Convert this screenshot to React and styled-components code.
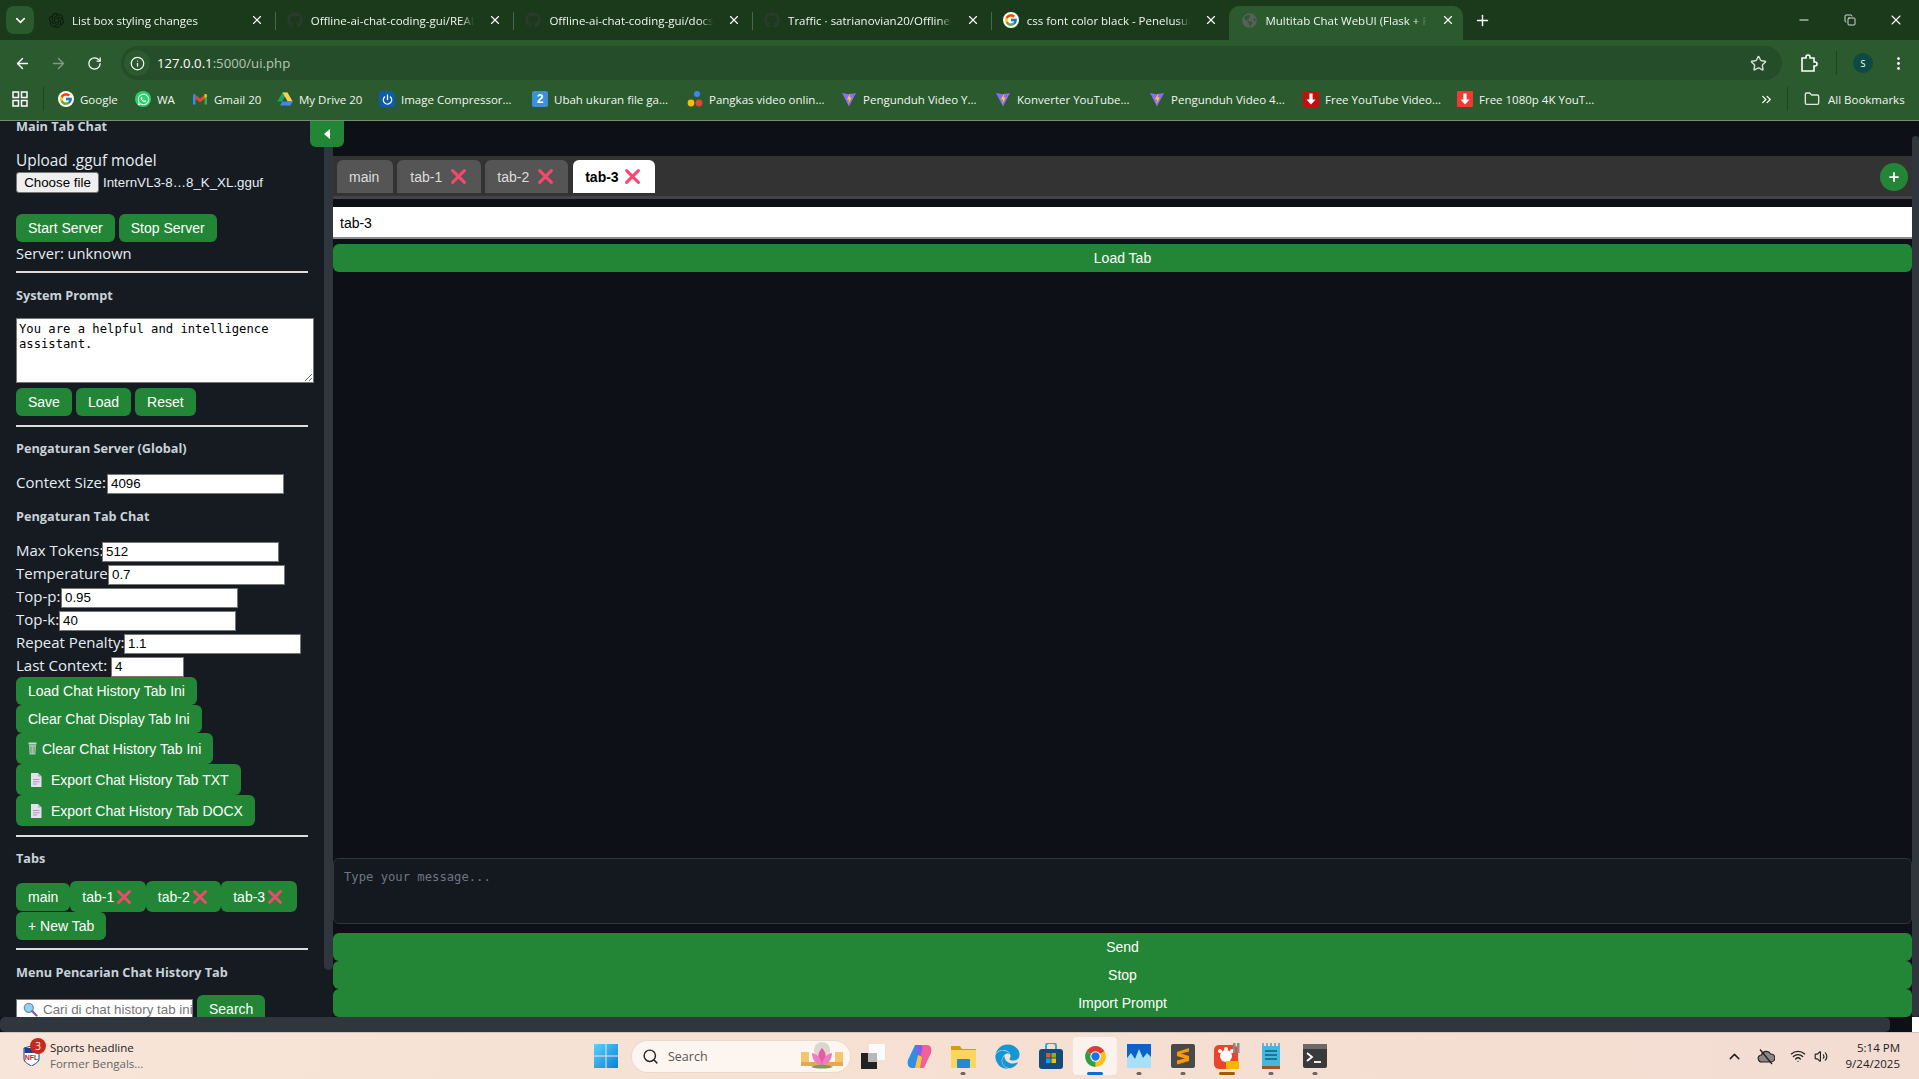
import React from 'react'
import styled, { createGlobalStyle } from 'styled-components'
import {
    ArrowLeft, ArrowRight, RotateCw, Info, Star, MoreVertical, Plus, X, Minus, Copy,
    ChevronDown, ChevronsRight, Folder, Search as SearchIcon, ChevronUp, Wifi, Volume2, Power,
} from 'lucide-react'
import { FcGoogle } from 'react-icons/fc'
import { FaWhatsapp, FaGithub, FaGlobeAmericas, FaEdge } from 'react-icons/fa'
import { SiOpenai } from 'react-icons/si'

const GlobalStyle = createGlobalStyle`
    html, body { margin: 0; padding: 0; height: 100%; overflow: hidden; background: #0d1117; }
    * { box-sizing: border-box; }
`

const UI_FONT = '"Open Sans", "Noto Sans", sans-serif'
const ARIAL = '"Liberation Sans", Arial, sans-serif'
const MONO = '"DejaVu Sans Mono", "Liberation Mono", monospace'
const GREEN = '#238636'

/* ---------- drawn icons ---------- */

const CrossMark = ({ size = 14 }) => (
    <svg width={size} height={size} viewBox="0 0 14 14">
        <path d="M1.500 1.500L12.500 12.500M12.500 1.500L1.500 12.500" stroke="#f7476f" strokeWidth="2.800" strokeLinecap="round" />
    </svg>
)

const ExtensionIcon = () => (
    <svg width="18" height="20" viewBox="0 0 18 20" fill="none" stroke="#fff" strokeWidth="1.600">
        <path d="M2 5h4V4a2 2 0 0 1 4 0v1h4v4h1a2 2 0 0 1 0 4h-1v5H2z" />
    </svg>
)

const CloudSlashIcon = () => (
    <svg width="18" height="17" viewBox="0 0 18 17">
        <path d="M5 14a3.500 3.500 0 0 1-.6-7A5 5 0 0 1 13.600 6a4 4 0 0 1 .4 8z" fill="#8a8785" stroke="#222" strokeWidth="1.200" />
        <path d="M3 1.500L15 16" stroke="#222" strokeWidth="1.300" />
    </svg>
)

const ChromeLogo = ({ size = 16 }) => (
    <svg width={size} height={size} viewBox="0 0 48 48">
        <path d="M24 24L6.700 14A20 20 0 0 1 41.300 14Z" fill="#e33b2e" />
        <path d="M24 24L41.300 14A20 20 0 0 1 24 44Z" fill="#fbc116" />
        <path d="M24 24L24 44A20 20 0 0 1 6.700 14Z" fill="#2f9e44" />
        <circle cx="24" cy="24" r="10" fill="#fff" />
        <circle cx="24" cy="24" r="8" fill="#1a73e8" />
    </svg>
)

const GmailIcon = () => (
    <svg width="16" height="16" viewBox="0 0 16 16">
        <path d="M3.500 4L8 7.600 12.500 4v4L8 11.200 3.500 8z" fill="#ea4335" />
        <path d="M1 4.500C1 3 2.500 2.500 3.500 3.300V13.500H1.500A.5 .5 0 0 1 1 13z" fill="#4285f4" />
        <path d="M15 4.500C15 3 13.500 2.500 12.500 3.300V13.500h2A.5 .5 0 0 0 15 13z" fill="#34a853" />
        <path d="M12.500 3.300C13.500 2.500 15 3 15 4.500V5.500L12.500 7.500z" fill="#fbbc04" />
    </svg>
)

const DriveIcon = () => (
    <svg width="16" height="16" viewBox="0 0 16 16">
        <path d="M5.500 1.500h5L5.200 10.500H.3z" fill="#1fa463" />
        <path d="M10.500 1.500l5.200 9h-5L5.500 1.500z" fill="#ffd04b" />
        <path d="M3 14.500l2.200-4h10.500l-2.300 4z" fill="#4285f4" />
    </svg>
)

const CompressorIcon = () => (
    <IconTile $bg="#0d5cab" $size={16}><Power size={11} color="#fff" strokeWidth={3} /></IconTile>
)

const DotsIcon = () => (
    <svg width="16" height="16" viewBox="0 0 16 16">
        <circle cx="10" cy="3" r="3" fill="#4285f4" />
        <circle cx="4" cy="12" r="3.400" fill="#fbbc04" />
        <circle cx="12" cy="12" r="3.400" fill="#ea4335" />
    </svg>
)

const BoltIcon = () => (
    <svg width="16" height="16" viewBox="0 0 16 16">
        <path d="M1 2l7 1.200L15 2 8 15.500z" fill="#8d6cf5" />
        <path d="M9.500 2L5.800 8.400h2.300L7.200 13l3.600-6.400H8.600z" fill="#ffc91f" />
    </svg>
)

const RedArrowIcon = ({ dark }) => (
    <svg width="16" height="16" viewBox="0 0 16 16">
        <rect width="16" height="16" rx="1" fill={dark ? '#c40f0f' : '#ee3a32'} />
        <path d="M6.400 2.500h3.200v6H12.500L8 13.500 3.500 8.500h2.900z" fill="#fff" />
    </svg>
)

const AppsIcon = () => (
    <svg width="16" height="16" viewBox="0 0 16 16" fill="none" stroke="#fff" strokeWidth="1.500">
        <rect x="1" y="1" width="5.500" height="5.500" />
        <rect x="9.500" y="1" width="5.500" height="5.500" />
        <rect x="1" y="9.500" width="5.500" height="5.500" />
        <rect x="9.500" y="9.500" width="5.500" height="5.500" />
    </svg>
)

const TrashGlyph = () => (
    <svg width="9" height="13" viewBox="0 0 9 13">
        <rect x="0.500" y="0.500" width="8" height="2" fill="#cfd8cf" />
        <path d="M1 3h7l-.6 9.500H1.600z" fill="#a9c4ae" />
        <path d="M3 4.500v6.500M6 4.500v6.500" stroke="#5e8a69" strokeWidth="0.800" />
    </svg>
)

const PageGlyph = () => (
    <svg width="12" height="14" viewBox="0 0 12 14">
        <path d="M1 0h7l3.500 3.500V14H1z" fill="#e7deef" />
        <path d="M8 0l3.500 3.500H8z" fill="#b9aec9" />
        <path d="M3 6.500h6.500M3 8.800h6.500M3 11h4" stroke="#a99cb8" strokeWidth="1" />
    </svg>
)

const LensGlyph = () => (
    <svg width="15" height="15" viewBox="0 0 15 15">
        <circle cx="5.800" cy="5.800" r="4.500" fill="#8fd3f4" stroke="#7a8ea8" strokeWidth="1.300" />
        <path d="M9.200 9.200l4.300 4.300" stroke="#8e5ea8" strokeWidth="2.400" strokeLinecap="round" />
    </svg>
)

const WindowsLogo = () => (
    <svg width="24" height="24" viewBox="0 0 24 24">
        <defs>
            <linearGradient id="winBlue" x1="0" y1="0" x2="1" y2="1">
                <stop offset="0" stopColor="#5ad1fb" />
                <stop offset="1" stopColor="#0a7fd6" />
            </linearGradient>
        </defs>
        <path d="M0 0h11.500v11.500H0zM12.500 0H24v11.500H12.500zM0 12.500h11.500V24H0zM12.500 12.500H24V24H12.500z" fill="url(#winBlue)" />
    </svg>
)

const TaskViewIcon = () => (
    <svg width="25" height="25" viewBox="0 0 25 25">
        <rect x="8" y="0" width="16" height="16" fill="#fbfbfb" />
        <rect x="0" y="9" width="16" height="16" fill="#222" />
        <rect x="7" y="9" width="9" height="9" fill="#b8b8b8" />
    </svg>
)

const CopilotIcon = () => (
    <svg width="25" height="25" viewBox="0 0 25 25">
        <path d="M8 1h6l-5 23H5C1 24 0 20 1 16z" fill="#2f8fe8" />
        <path d="M9 1h5c2 0 3 1 4 4l1 5-8 3z" fill="#8a5be8" />
        <path d="M17 24h-6l5-23h4c4 0 5 4 4 8z" fill="#f0609a" />
        <path d="M8 24l3-13 4 2-2 11z" fill="#f6c343" />
    </svg>
)

const FilesIcon = () => (
    <svg width="25" height="25" viewBox="0 0 25 25">
        <path d="M0 2h9l2 3h14v19H0z" fill="#d99a12" />
        <rect y="6" width="25" height="18" fill="#fbd75b" />
        <rect x="6" y="15" width="13" height="9" rx="1" fill="#1f8ad6" />
    </svg>
)

const StoreIcon = () => (
    <svg width="24" height="26" viewBox="0 0 24 26">
        <path d="M7 7V3a3 3 0 0 1 3-3h4a3 3 0 0 1 3 3v4" fill="none" stroke="#35a7e0" strokeWidth="2" />
        <rect y="6" width="24" height="20" rx="3" fill="#164a78" />
        <rect x="7" y="10" width="4.500" height="4.500" fill="#f25022" />
        <rect x="12.500" y="10" width="4.500" height="4.500" fill="#7fba00" />
        <rect x="7" y="15.500" width="4.500" height="4.500" fill="#00a4ef" />
        <rect x="12.500" y="15.500" width="4.500" height="4.500" fill="#ffb900" />
    </svg>
)

const WaveIcon = () => (
    <svg width="24" height="24" viewBox="0 0 24 24">
        <rect width="24" height="24" fill="#0d62c9" />
        <path d="M0 14l4-5 4 6 4-10 4 9 4-5 4 4v11H0z" fill="#a8e0fa" />
    </svg>
)

const SublimeIcon = () => (
    <IconTile $bg="#4a4a4a" $size={24} $radius={2}>
        <svg width="14" height="18" viewBox="0 0 14 18">
            <path d="M13 1L1 5v4l12 4V9L5 6.600 13 4.500zM1 13.500L9 11.400 13 13v1L1 17.500z" fill="#ff9800" />
        </svg>
    </IconTile>
)

const GomIcon = () => (
    <svg width="26" height="26" viewBox="0 0 26 26">
        <rect y="2" width="24" height="24" rx="5" fill="#e8452c" />
        <circle cx="12" cy="13" r="6" fill="#fff" />
        <circle cx="6" cy="8" r="2" fill="#fff" />
        <circle cx="12" cy="6" r="2" fill="#fff" />
        <circle cx="18" cy="8" r="2" fill="#fff" />
        <rect x="12" y="18" width="13" height="8" rx="1" fill="#f7b500" />
        <rect x="19" y="0" width="2.500" height="10" fill="#8a8a8a" />
        <rect x="23" y="0" width="2.500" height="10" fill="#8a8a8a" />
    </svg>
)

const NotesIcon = () => (
    <svg width="18" height="26" viewBox="0 0 18 26">
        <path d="M1 0v3M5 0v3M9 0v3M13 0v3M17 0v3" stroke="#2f8fb5" strokeWidth="1.200" />
        <rect y="3" width="18" height="20" fill="#45b6dc" />
        <path d="M3 8h12M3 12h12M3 16h12" stroke="#0f5f80" strokeWidth="1.500" />
        <rect y="23" width="18" height="3" fill="#9a5a1e" />
    </svg>
)

const TerminalIcon = () => (
    <svg width="24" height="24" viewBox="0 0 24 24">
        <rect width="24" height="24" rx="2" fill="#3a3a3a" />
        <rect width="24" height="5" fill="#6a6a6a" />
        <path d="M4 9l5 4-5 4" fill="none" stroke="#fff" strokeWidth="1.800" />
        <path d="M11 18h7" stroke="#fff" strokeWidth="1.800" />
    </svg>
)

const LotusPicture = () => (
    <svg width="46" height="28" viewBox="0 0 46 28">
        <rect x="2" y="10" width="8" height="10" fill="#f3c66b" />
        <rect x="36" y="10" width="8" height="10" fill="#f3c66b" />
        <circle cx="23" cy="8" r="8" fill="#dcd6cf" />
        <path d="M2 20h42v4H2z" fill="#e6a94a" />
        <path d="M23 6c5 5 5 12 0 17-5-5-5-12 0-17z" fill="#e65aa8" />
        <path d="M13 11c6 1 9 6 10 12-6 0-10-5-10-12zM33 11c-6 1-9 6-10 12 6 0 10-5 10-12z" fill="#f07cc0" />
        <path d="M12 25c6-3 16-3 22 0-6 2-16 2-22 0z" fill="#7c9a58" />
    </svg>
)

const NflShield = () => (
    <svg width="17" height="20" viewBox="0 0 17 20">
        <path d="M1 2l7.500-2L16 2v11c0 3-4 5-7.500 7C5 18 1 16 1 13z" fill="#fff" stroke="#1c3f94" />
        <rect x="1.500" y="2" width="14" height="5" fill="#1c3f94" />
        <text x="8.500" y="14" fontSize="7" fontWeight="700" textAnchor="middle" fill="#d2232a" fontFamily="Liberation Sans">NFL</text>
    </svg>
)

/* ---------- browser chrome ---------- */

const IconTile = styled.span`
    width: ${({ $size }) => $size}px;
    height: ${({ $size }) => $size}px;
    border-radius: ${({ $radius = 2 }) => $radius}px;
    background: ${({ $bg }) => $bg};
    color: #fff;
    font: 700 12px ${ARIAL};
    display: flex;
    align-items: center;
    justify-content: center;
    flex: none;
`

const BrowserFrame = styled.header`
    flex: none;
    height: 121px;
    background: #2a5a2d;
    border-bottom: 1px solid #6d9270;
    font-family: ${UI_FONT};
`

const TabStrip = styled.div`
    height: 40px;
    background: #1b3a1c;
    display: flex;
    align-items: flex-end;
    overflow: hidden;
`

const TabListButton = styled.div`
    width: 28px;
    height: 28px;
    margin: 0 2px 6px 6px;
    border-radius: 8px;
    background: #2a5a2d;
    display: flex;
    align-items: center;
    justify-content: center;
    flex: none;
`

const BrowserTab = styled.div`
    width: ${({ $active }) => ($active ? 234 : 238.700)}px;
    flex: none;
    height: 34px;
    padding: 0 ${({ $active }) => ($active ? 8 : 11)}px 6px 12px;
    display: flex;
    align-items: center;
    gap: 8px;
    border-radius: 10px 10px 0 0;
    background: ${({ $active }) => ($active ? '#2a5a2d' : 'transparent')};
    position: relative;
    &::before {
        content: '';
        display: ${({ $active, $noSep }) => ($active || $noSep ? 'none' : 'block')};
        position: absolute;
        left: 0;
        top: 6px;
        height: 18px;
        width: 1px;
        background: #46694a;
    }
`

const BrowserTabIcon = styled.span`
    width: 16px;
    height: 16px;
    flex: none;
    display: flex;
    align-items: center;
    justify-content: center;
`

const BrowserTabTitle = styled.span`
    flex: 1;
    min-width: 0;
    font-size: 11.500px;
    color: #f1f5f1;
    white-space: nowrap;
    overflow: hidden;
    margin-right: 6px;
    -webkit-mask-image: linear-gradient(90deg, #000 92%, transparent);
    mask-image: linear-gradient(90deg, #000 92%, transparent);
`

const NewTabButton = styled.div`
    width: 28px;
    height: 28px;
    margin: 0 0 6px 5px;
    display: flex;
    align-items: center;
    justify-content: center;
    flex: none;
`

const StripSpacer = styled.div`
    flex: 1;
`

const WindowControl = styled.div`
    width: 46px;
    height: 40px;
    display: flex;
    align-items: center;
    justify-content: center;
    flex: none;
`

const Toolbar = styled.div`
    height: 40px;
    padding: 6px 0 0 4px;
    display: flex;
    align-items: center;
`

const NavButton = styled.div`
    width: 36px;
    height: 34px;
    flex: none;
    display: flex;
    align-items: center;
    justify-content: center;
`

const AddressBar = styled.div`
    flex: 1;
    height: 34px;
    margin-left: 9px;
    border-radius: 17px;
    background: #264d2a;
    display: flex;
    align-items: center;
    padding: 0 15px 0 3px;
`

const SiteInfo = styled.div`
    width: 26px;
    height: 26px;
    border-radius: 50%;
    background: #2a5a2d;
    display: flex;
    align-items: center;
    justify-content: center;
    flex: none;
`

const UrlText = styled.div`
    flex: 1;
    margin-left: 7px;
    font-size: 13.200px;
    color: #b4c7b6;
    span { color: #fff; }
`

const ToolbarActions = styled.div`
    width: 137px;
    flex: none;
    display: flex;
    align-items: center;
    padding-left: 18px;
`

const ToolDivider = styled.div`
    width: 1px;
    height: 24px;
    background: #1f4423;
    margin: ${({ $margin }) => $margin};
    flex: none;
`

const Avatar = styled.div`
    width: 20px;
    height: 20px;
    margin-right: 17px;
    border-radius: 50%;
    background: #0d4a44;
    color: #fff;
    font-size: 9px;
    display: flex;
    align-items: center;
    justify-content: center;
    flex: none;
`

const BookmarkBar = styled.div`
    height: 40px;
    padding: 0 0 2px 12px;
    display: flex;
    align-items: center;
`

const Bookmark = styled.div`
    width: ${({ $w }) => $w}px;
    flex: none;
    display: flex;
    align-items: center;
    gap: 6px;
    font-size: 11.500px;
    color: #f3f6f3;
    white-space: nowrap;
`

const FaviconDisc = styled.span`
    width: 16px;
    height: 16px;
    border-radius: 50%;
    background: ${({ $bg = '#fff' }) => $bg};
    display: flex;
    align-items: center;
    justify-content: center;
    flex: none;
`

const BookmarksEnd = styled.div`
    margin-left: auto;
    width: 168px;
    flex: none;
    display: flex;
    align-items: center;
    padding-left: 8px;
    font-size: 11.500px;
    color: #f3f6f3;
    white-space: nowrap;
`

const BookmarksLabel = styled.span`
    margin-left: 8px;
`

/* ---------- page ---------- */

const Window = styled.div`
    height: 100vh;
    display: flex;
    flex-direction: column;
    overflow: hidden;
`

const PageArea = styled.div`
    flex: 1;
    min-height: 0;
    display: flex;
    position: relative;
    background: #0d1117;
`

const Sidebar = styled.aside`
    width: 324px;
    flex: none;
    background: #161b22;
    padding: 0 16px;
    overflow: hidden;
    color: #e6edf3;
    font-family: ${UI_FONT};
    font-size: 15px;
`

const ScrollTrack = styled.div`
    width: ${({ $w }) => $w}px;
    flex: none;
    background: ${({ $bg }) => $bg};
    padding-top: ${({ $top = 0 }) => $top}px;
`

const ScrollThumb = styled.div`
    width: 100%;
    height: ${({ $h }) => $h};
    background: #30363d;
    border-radius: 5px;
`

const ToggleButton = styled.div`
    position: absolute;
    left: 310px;
    top: 0;
    width: 34px;
    height: 26px;
    background: ${GREEN};
    border-radius: 0 0 6px 6px;
    display: flex;
    align-items: center;
    justify-content: center;
`

const SectionTitle = styled.h3`
    margin: ${({ $top }) => $top}px 0 0;
    font-size: 12.700px;
    line-height: 16px;
    font-weight: 700;
    color: #c9d1d9;
    white-space: nowrap;
`

const PlainLine = styled.div`
    margin-top: ${({ $top }) => $top}px;
    font-size: ${({ $size }) => $size}px;
    line-height: ${({ $lh }) => $lh}px;
    height: 22px;
    white-space: nowrap;
`

const FileRow = styled.div`
    margin-top: 1px;
    height: 21px;
    display: flex;
    align-items: center;
    font: 13.330px ${ARIAL};
    white-space: nowrap;
`

const ChooseFile = styled.button`
    width: 83px;
    height: 21px;
    padding: 0;
    margin-right: 4px;
    background: #efefef;
    border: 1px solid #767676;
    border-radius: 3px;
    color: #000;
    font: 13.330px ${ARIAL};
`

const ButtonRow = styled.div`
    margin-top: ${({ $top }) => $top}px;
    display: flex;
    gap: 4px;
`

const ActionButton = styled.button`
    height: ${({ $h = 28 }) => $h}px;
    padding: 0 12px;
    border: 0;
    border-radius: 6px;
    background: ${GREEN};
    color: #fff;
    font: 14px ${ARIAL};
    white-space: nowrap;
    display: inline-flex;
    align-items: center;
    gap: ${({ $gap = 4 }) => $gap}px;
    flex: none;
`

const GlyphSlot = styled.span`
    display: flex;
    margin: 0 ${({ $right = 0 }) => $right}px 0 ${({ $left = 0 }) => $left}px;
`

const Divider = styled.hr`
    margin: ${({ $top }) => $top}px 0 0;
    width: 292px;
    height: 2px;
    border: 0;
    background: #dcdcdc;
`

const PromptBox = styled.textarea`
    display: block;
    margin-top: 15px;
    width: 298px;
    height: 65px;
    padding: 3px 2px 2px;
    background: #fff;
    color: #000;
    border: 1px solid #767676;
    border-radius: 0;
    font: 12.200px/15px ${MONO};
    resize: both;
    outline: none;
`

const FieldRow = styled.div`
    height: 23px;
    margin-top: ${({ $top = 0 }) => $top}px;
    display: flex;
    align-items: center;
`

const FieldLabel = styled.label`
    width: ${({ $w }) => $w}px;
    margin-bottom: 3px;
    flex: none;
    white-space: nowrap;
`

const FieldInput = styled.input`
    width: ${({ $w = 177 }) => $w}px;
    height: 20px;
    padding: 0 3px 1px;
    background: #fff;
    color: #000;
    border: 1px solid #767676;
    border-radius: 0;
    font: 13.330px ${ARIAL};
    outline: none;
`

const ActionStack = styled.div`
    margin-top: -1px;
    display: flex;
    flex-direction: column;
    align-items: flex-start;
`

const SideTabs = styled.div`
    margin-top: 15px;
    display: flex;
    flex-wrap: wrap;
    align-items: center;
`

const SideTabBreak = styled.div`
    flex-basis: 100%;
`

const SearchRow = styled.div`
    margin-top: 15px;
    display: flex;
    align-items: flex-start;
    gap: 4px;
`

const SearchBox = styled.div`
    width: 177px;
    height: 21px;
    margin-top: 4px;
    padding-left: 6px;
    background: #fff;
    border: 1px solid #767676;
    display: flex;
    align-items: center;
    gap: 5px;
    flex: none;
`

const SearchField = styled.input`
    flex: 1;
    min-width: 0;
    border: 0;
    padding: 0;
    outline: none;
    font: 13.330px ${ARIAL};
    &::placeholder { color: #757575; opacity: 1; }
`

/* ---------- main column ---------- */

const MainColumn = styled.main`
    flex: 1;
    min-width: 0;
    display: flex;
    flex-direction: column;
    padding-top: 35px;
    font-family: ${ARIAL};
`

const ChatTabBar = styled.div`
    height: 43px;
    flex: none;
    padding: 4px 4px 0;
    background: #333;
    border-bottom: 3px solid #444;
    display: flex;
    align-items: flex-start;
    gap: 4px;
`

const ChatTab = styled.div`
    height: 33px;
    padding: 0 ${({ $pr = 12 }) => $pr}px 0 ${({ $pl = 12 }) => $pl}px;
    margin-left: ${({ $active }) => ($active ? 1 : 0)}px;
    border-radius: 6px 6px 0 0;
    background: ${({ $active }) => ($active ? '#fff' : '#555')};
    color: ${({ $active }) => ($active ? '#000' : '#ddd')};
    font-size: 14px;
    font-weight: ${({ $active }) => ($active ? 700 : 400)};
    display: flex;
    align-items: center;
`

const ChatTabClose = styled.span`
    margin: 0 3px 0 ${({ $left = 9 }) => $left}px;
    display: flex;
`

const AddTabButton = styled.div`
    margin: 3px 0 0 auto;
    width: 28px;
    height: 28px;
    border-radius: 50%;
    background: ${GREEN};
    display: flex;
    align-items: center;
    justify-content: center;
`

const TabNameInput = styled.input`
    display: block;
    width: 100%;
    height: 32px;
    margin-top: 8px;
    padding: 2px 7px 0;
    background: #fff;
    color: #000;
    border: 0;
    border-bottom: 2px solid #8a8a8a;
    font: 14px ${ARIAL};
    outline: none;
    flex: none;
`

const WideButton = styled.button`
    display: block;
    width: 100%;
    height: 28px;
    margin-top: ${({ $top = 0 }) => $top}px;
    border: 0;
    border-radius: 6px;
    background: ${GREEN};
    color: #fff;
    font: 14px ${ARIAL};
    flex: none;
`

const ChatLog = styled.div`
    flex: 1;
    min-height: 0;
`

const MessageBox = styled.textarea`
    display: block;
    width: 100%;
    height: 66px;
    flex: none;
    padding: 11px 10px 10px;
    background: #14181f;
    color: #c9d1d9;
    border: 1px solid #30363d;
    border-radius: 6px;
    font: 12.200px/15px ${MONO};
    resize: none;
    outline: none;
    &::placeholder { color: #6e7681; opacity: 1; }
`

const HorizontalBar = styled.div`
    height: 15px;
    flex: none;
    display: flex;
    background: #0d1117;
`

const HorizontalThumb = styled.div`
    width: 1890px;
    background: #30363d;
    border-radius: 5px;
`

const ScrollCorner = styled.div`
    margin-left: auto;
    width: 7px;
    background: #fff;
`

/* ---------- taskbar ---------- */

const Taskbar = styled.footer`
    height: 47px;
    flex: none;
    border-top: 1px solid #cfc6c0;
    background: linear-gradient(90deg, #f8e5d9, #f5e0d2 50%, #f3dcd2);
    display: flex;
    align-items: center;
    font-family: ${UI_FONT};
    color: #222;
`

const NewsWidget = styled.div`
    width: 588px;
    flex: none;
    padding-left: 23px;
    display: flex;
    align-items: center;
    gap: 10px;
    position: relative;
`

const NewsBadge = styled.span`
    position: absolute;
    left: 30px;
    top: -2px;
    width: 16px;
    height: 16px;
    border-radius: 50%;
    background: #c42b1c;
    color: #fff;
    font-size: 10px;
    display: flex;
    align-items: center;
    justify-content: center;
`

const NewsText = styled.div`
    font-size: 11.500px;
    line-height: 16px;
    white-space: nowrap;
    span { display: block; color: #666; }
`

const StartButton = styled.div`
    width: 36px;
    flex: none;
    display: flex;
    justify-content: center;
`

const TaskSearch = styled.div`
    width: 218px;
    height: 31px;
    margin-left: 8px;
    padding: 0 5px 0 10px;
    flex: none;
    border-radius: 16px;
    background: #fdf5f0;
    box-shadow: 0 0 0 1px #e9d9ce;
    display: flex;
    align-items: center;
    gap: 9px;
    font-size: 12.500px;
    color: #555;
    svg:last-child { margin-left: auto; }
`

const TaskSlot = styled.div`
    width: ${({ $w = 44 }) => $w}px;
    height: 38px;
    flex: none;
    border-radius: 4px;
    background: ${({ $active }) => ($active ? 'rgba(255,255,255,.6)' : 'transparent')};
    display: flex;
    align-items: center;
    justify-content: center;
    position: relative;
    &::after {
        content: '';
        display: ${({ $mark }) => ($mark ? 'block' : 'none')};
        position: absolute;
        bottom: 0;
        left: 50%;
        transform: translateX(-50%);
        height: 3px;
        border-radius: 2px;
        width: ${({ $mark }) => ($mark === 'dot' ? 5 : 16)}px;
        background: ${({ $mark }) => ($mark === 'dot' ? '#666' : $mark)};
    }
`

const TrayIcons = styled.div`
    margin-left: auto;
    display: flex;
    align-items: center;
`

const TraySlot = styled.div`
    width: ${({ $w }) => $w}px;
    flex: none;
    display: flex;
    justify-content: center;
`

const Clock = styled.div`
    width: 64px;
    margin: 0 19px 0 8px;
    text-align: right;
    font-size: 11.500px;
    line-height: 16px;
    white-space: nowrap;
`

/* ---------- data ---------- */

const browserTabs = [
    { title: 'List box styling changes', icon: <SiOpenai size={15} color="#0c1a0c" /> },
    { title: 'Offline-ai-chat-coding-gui/README.md at main', icon: <FaGithub size={16} color="#2a3a2c" /> },
    { title: 'Offline-ai-chat-coding-gui/docs at main', icon: <FaGithub size={16} color="#2a3a2c" /> },
    { title: 'Traffic · satrianovian20/Offline-ai-chat', icon: <FaGithub size={16} color="#2a3a2c" /> },
    { title: 'css font color black - Penelusuran Google', icon: <FaviconDisc><FcGoogle size={14} /></FaviconDisc> },
    { title: 'Multitab Chat WebUI (Flask + Python)', icon: <FaGlobeAmericas size={15} color="#5a5f5a" />, active: true },
]

const bookmarks = [
    { label: 'Google', w: 77, icon: <FaviconDisc><FcGoogle size={14} /></FaviconDisc> },
    { label: 'WA', w: 57, icon: <FaviconDisc $bg="#25d366"><FaWhatsapp size={13} color="#fff" /></FaviconDisc> },
    { label: 'Gmail 20', w: 85, icon: <GmailIcon /> },
    { label: 'My Drive 20', w: 102, icon: <DriveIcon /> },
    { label: 'Image Compressor...', w: 153, icon: <CompressorIcon /> },
    { label: 'Ubah ukuran file ga...', w: 155, icon: <IconTile $bg="#3d8fdc" $size={16}>2</IconTile> },
    { label: 'Pangkas video onlin...', w: 154, icon: <DotsIcon /> },
    { label: 'Pengunduh Video Y...', w: 154, icon: <BoltIcon /> },
    { label: 'Konverter YouTube...', w: 154, icon: <BoltIcon /> },
    { label: 'Pengunduh Video 4...', w: 154, icon: <BoltIcon /> },
    { label: 'Free YouTube Video...', w: 154, icon: <RedArrowIcon dark /> },
    { label: 'Free 1080p 4K YouT...', w: 154, icon: <RedArrowIcon /> },
]

const serverFields = [{ label: 'Context Size:', w: 91, value: '4096' }]

const tabFields = [
    { label: 'Max Tokens:', w: 86, value: '512' },
    { label: 'Temperature:', w: 92, value: '0.7' },
    { label: 'Top-p:', w: 45, value: '0.95' },
    { label: 'Top-k:', w: 43, value: '40' },
    { label: 'Repeat Penalty:', w: 108, value: '1.1' },
    { label: 'Last Context:', w: 95, value: '4', inputW: 73 },
]

const taskApps = [
    { icon: <TaskViewIcon />, w: 47 },
    { icon: <CopilotIcon /> },
    { icon: <FilesIcon />, mark: 'dot' },
    { icon: <FaEdge size={25} color="#1597d5" /> },
    { icon: <StoreIcon /> },
    { icon: <ChromeLogo size={25} />, active: true, mark: '#0a6cd6' },
    { icon: <WaveIcon />, mark: 'dot' },
    { icon: <SublimeIcon />, mark: 'dot' },
    { icon: <GomIcon />, mark: '#a35a00' },
    { icon: <NotesIcon />, mark: 'dot' },
    { icon: <TerminalIcon />, mark: 'dot' },
]

const App = () => {
    return (
        <Window>
            <GlobalStyle />
            <BrowserFrame>
                <TabStrip>
                    <TabListButton><ChevronDown size={15} color="#fff" strokeWidth={2.5} /></TabListButton>
                    {browserTabs.map((tab, i) => (
                        <BrowserTab key={tab.title} $active={tab.active} $noSep={i === 0 || i === 5}>
                            <BrowserTabIcon>{tab.icon}</BrowserTabIcon>
                            <BrowserTabTitle>{tab.title}</BrowserTabTitle>
                            <X size={14} color="#fff" />
                        </BrowserTab>
                    ))}
                    <NewTabButton><Plus size={17} color="#fff" /></NewTabButton>
                    <StripSpacer />
                    <WindowControl><Minus size={14} color="#fff" strokeWidth={1.6} /></WindowControl>
                    <WindowControl><Copy size={12} color="#fff" strokeWidth={1.6} /></WindowControl>
                    <WindowControl><X size={16} color="#fff" strokeWidth={1.6} /></WindowControl>
                </TabStrip>
                <Toolbar>
                    <NavButton><ArrowLeft size={17} color="#fff" /></NavButton>
                    <NavButton><ArrowRight size={17} color="#7f9c82" /></NavButton>
                    <NavButton><RotateCw size={15} color="#fff" /></NavButton>
                    <AddressBar>
                        <SiteInfo><Info size={15} color="#fff" /></SiteInfo>
                        <UrlText><span>127.0.0.1</span>:5000/ui.php</UrlText>
                        <Star size={17} color="#d5dfd6" />
                    </AddressBar>
                    <ToolbarActions>
                        <ExtensionIcon />
                        <ToolDivider $margin="0 16px 0 18px" />
                        <Avatar>S</Avatar>
                        <MoreVertical size={17} color="#fff" />
                    </ToolbarActions>
                </Toolbar>
                <BookmarkBar>
                    <AppsIcon />
                    <ToolDivider $margin="0 14px 0 15px" />
                    {bookmarks.map(item => (
                        <Bookmark key={item.label} $w={item.w}>{item.icon}{item.label}</Bookmark>
                    ))}
                    <BookmarksEnd>
                        <ChevronsRight size={15} color="#fff" />
                        <ToolDivider $margin="0 16px 0 13px" />
                        <Folder size={16} color="#dfe7df" />
                        <BookmarksLabel>All Bookmarks</BookmarksLabel>
                    </BookmarksEnd>
                </BookmarkBar>
            </BrowserFrame>

            <PageArea>
                <Sidebar>
                    <SectionTitle $top={-3}>Main Tab Chat</SectionTitle>
                    <PlainLine $top={15} $size={15.400} $lh={24}>Upload .gguf model</PlainLine>
                    <FileRow>
                        <ChooseFile>Choose file</ChooseFile>
                        InternVL3-8…8_K_XL.gguf
                    </FileRow>
                    <ButtonRow $top={21}>
                        <ActionButton>Start Server</ActionButton>
                        <ActionButton>Stop Server</ActionButton>
                    </ButtonRow>
                    <PlainLine $top={1} $size={14.700} $lh={20}>Server: unknown</PlainLine>
                    <Divider $top={6} />

                    <SectionTitle $top={14}>System Prompt</SectionTitle>
                    <PromptBox spellCheck={false} defaultValue="You are a helpful and intelligence assistant." />
                    <ButtonRow $top={5}>
                        <ActionButton>Save</ActionButton>
                        <ActionButton>Load</ActionButton>
                        <ActionButton>Reset</ActionButton>
                    </ButtonRow>
                    <Divider $top={9} />

                    <SectionTitle $top={13}>Pengaturan Server (Global)</SectionTitle>
                    {serverFields.map(field => (
                        <FieldRow key={field.label} $top={16}>
                            <FieldLabel $w={field.w}>{field.label}</FieldLabel>
                            <FieldInput defaultValue={field.value} />
                        </FieldRow>
                    ))}

                    <SectionTitle $top={13}>Pengaturan Tab Chat</SectionTitle>
                    {tabFields.map((field, i) => (
                        <FieldRow key={field.label} $top={i === 0 ? 16 : 0}>
                            <FieldLabel $w={field.w}>{field.label}</FieldLabel>
                            <FieldInput $w={field.inputW} defaultValue={field.value} />
                        </FieldRow>
                    ))}

                    <ActionStack>
                        <ActionButton>Load Chat History Tab Ini</ActionButton>
                        <ActionButton>Clear Chat Display Tab Ini</ActionButton>
                        <ActionButton $h={31} $gap={5}><TrashGlyph />Clear Chat History Tab Ini</ActionButton>
                        <ActionButton $h={31} $gap={9}><GlyphSlot $left={2}><PageGlyph /></GlyphSlot>Export Chat History Tab TXT</ActionButton>
                        <ActionButton $h={31} $gap={9}><GlyphSlot $left={2}><PageGlyph /></GlyphSlot>Export Chat History Tab DOCX</ActionButton>
                    </ActionStack>
                    <Divider $top={9} />

                    <SectionTitle $top={13}>Tabs</SectionTitle>
                    <SideTabs>
                        <ActionButton>main</ActionButton>
                        {['tab-1', 'tab-2', 'tab-3'].map(name => (
                            <ActionButton key={name} $h={31} $gap={3}>
                                {name}
                                <GlyphSlot $right={2.500}><CrossMark size={14} /></GlyphSlot>
                            </ActionButton>
                        ))}
                        <SideTabBreak />
                        <ActionButton>+ New Tab</ActionButton>
                    </SideTabs>
                    <Divider $top={8} />

                    <SectionTitle $top={14}>Menu Pencarian Chat History Tab</SectionTitle>
                    <SearchRow>
                        <SearchBox>
                            <LensGlyph />
                            <SearchField placeholder="Cari di chat history tab ini" />
                        </SearchBox>
                        <ActionButton>Search</ActionButton>
                    </SearchRow>
                </Sidebar>
                <ScrollTrack $w={9} $bg="#161b22"><ScrollThumb $h="849px" /></ScrollTrack>
                <ToggleButton>
                    <svg width="7" height="10" viewBox="0 0 7 10"><path d="M6 0v10L0 5z" fill="#fff" /></svg>
                </ToggleButton>

                <MainColumn>
                    <ChatTabBar>
                        <ChatTab $pr={14}>main</ChatTab>
                        <ChatTab $pl={13}>tab-1<ChatTabClose><CrossMark size={15} /></ChatTabClose></ChatTab>
                        <ChatTab>tab-2<ChatTabClose><CrossMark size={15} /></ChatTabClose></ChatTab>
                        <ChatTab $active>tab-3<ChatTabClose $left={6}><CrossMark size={15} /></ChatTabClose></ChatTab>
                        <AddTabButton><Plus size={14} color="#fff" strokeWidth={3} /></AddTabButton>
                    </ChatTabBar>
                    <TabNameInput defaultValue="tab-3" />
                    <WideButton $top={5}>Load Tab</WideButton>
                    <ChatLog />
                    <MessageBox placeholder="Type your message..." />
                    <WideButton $top={9}>Send</WideButton>
                    <WideButton>Stop</WideButton>
                    <WideButton>Import Prompt</WideButton>
                </MainColumn>
                <ScrollTrack $w={7} $bg="#0d1117" $top={15}><ScrollThumb $h="100%" /></ScrollTrack>
            </PageArea>

            <HorizontalBar>
                <HorizontalThumb />
                <ScrollCorner />
            </HorizontalBar>

            <Taskbar>
                <NewsWidget>
                    <NflShield />
                    <NewsBadge>3</NewsBadge>
                    <NewsText>Sports headline<span>Former Bengals...</span></NewsText>
                </NewsWidget>
                <StartButton><WindowsLogo /></StartButton>
                <TaskSearch>
                    <SearchIcon size={17} color="#222" />
                    Search
                    <LotusPicture />
                </TaskSearch>
                {taskApps.map((app, i) => (
                    <TaskSlot key={i} $w={app.w} $active={app.active} $mark={app.mark}>{app.icon}</TaskSlot>
                ))}
                <TrayIcons>
                    <TraySlot $w={32}><ChevronUp size={17} color="#222" /></TraySlot>
                    <TraySlot $w={32}><CloudSlashIcon /></TraySlot>
                    <TraySlot $w={32}><Wifi size={16} color="#222" /></TraySlot>
                    <TraySlot $w={14}><Volume2 size={15} color="#222" /></TraySlot>
                </TrayIcons>
                <Clock>5:14 PM<br />9/24/2025</Clock>
            </Taskbar>
        </Window>
    )
}

export default App
